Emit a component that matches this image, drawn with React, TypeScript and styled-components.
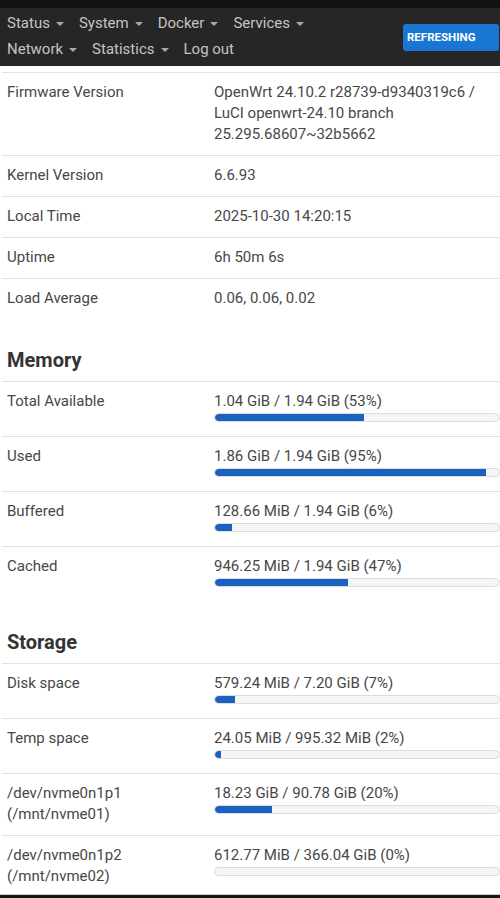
import * as React from 'react'
import styled, { createGlobalStyle } from 'styled-components'

const GlobalStyle = createGlobalStyle`
    html, body {
        margin: 0;
        padding: 0;
        background: #ffffff;
    }
    body {
        font-family: Roboto, "Liberation Sans", sans-serif;
        font-size: 15px;
        color: #404040;
    }
`

const Screen = styled.div`
    width: 500px;
    height: 898px;
    display: flex;
    flex-direction: column;
    overflow: hidden;
`

const Header = styled.header`
    flex: none;
    height: 58px;
    border-top: 8px solid #131313;
    background: #262626;
    display: flex;
    align-items: center;
    padding-right: 1px;
`

const Nav = styled.nav`
    width: 345px;
    display: flex;
    flex-wrap: wrap;
    align-self: flex-start;
    padding-top: 2px;
`

const NavItem = styled.span`
    display: flex;
    align-items: center;
    height: 26px;
    padding: 0 8px 0 7px;
    color: #c4c4c4;
    font-size: 15px;
`

const Caret = styled.span`
    width: 0;
    height: 0;
    margin-left: 6px;
    margin-top: 2px;
    border-left: 4px solid transparent;
    border-right: 4px solid transparent;
    border-top: 4px solid #a8a8a8;
`

const RefreshButton = styled.span`
    margin-left: auto;
    width: 96px;
    height: 27px;
    box-sizing: border-box;
    padding-left: 4px;
    display: flex;
    align-items: center;
    background: #1976d2;
    border-radius: 3px;
    color: #ffffff;
    font-weight: 700;
    font-size: 11.5px;
`

const Content = styled.main`
    flex: 1;
    overflow: hidden;
    padding: 6px 0 0 2px;
`

const Table = styled.div`
    display: flex;
    flex-direction: column;
`

const Row = styled.div`
    display: grid;
    grid-template-columns: 207px 1fr;
    border-top: 1px solid #e2e2e2;
    padding: 9px 0 10px;
    line-height: 21px;
`

const Label = styled.div`
    padding-left: 5px;
    color: #474747;
`

const Value = styled.div`
    padding-left: 5px;
    color: #474747;
`

const SectionTitle = styled.h3`
    margin: 28px 0 8px 5px;
    font-size: 20px;
    line-height: 26px;
    font-weight: 700;
    color: #333333;
`

const Bar = styled.div`
    height: 9px;
    margin: 1px 0 4px;
    box-sizing: border-box;
    border: 1px solid #dcdcdc;
    border-radius: 5px;
    background: #f5f5f5;
    overflow: hidden;
`

const Fill = styled.div`
    height: 100%;
    background: #1a62c0;
    border-radius: 4px 0 0 4px;
`

const BottomBar = styled.div`
    flex: none;
    height: 3px;
    border-top: 1px solid #d0d0d0;
    background: #141414;
`

const system = [
    { label: 'Firmware Version', value: ['OpenWrt 24.10.2 r28739-d9340319c6 /', 'LuCI openwrt-24.10 branch', '25.295.68607~32b5662'] },
    { label: 'Kernel Version', value: ['6.6.93'] },
    { label: 'Local Time', value: ['2025-10-30 14:20:15'] },
    { label: 'Uptime', value: ['6h 50m 6s'] },
    { label: 'Load Average', value: ['0.06, 0.06, 0.02'] },
]

const memory = [
    { label: ['Total Available'], text: '1.04 GiB / 1.94 GiB (53%)', pct: 52.5 },
    { label: ['Used'], text: '1.86 GiB / 1.94 GiB (95%)', pct: 95.5 },
    { label: ['Buffered'], text: '128.66 MiB / 1.94 GiB (6%)', pct: 6 },
    { label: ['Cached'], text: '946.25 MiB / 1.94 GiB (47%)', pct: 47 },
]

const storage = [
    { label: ['Disk space'], text: '579.24 MiB / 7.20 GiB (7%)', pct: 7 },
    { label: ['Temp space'], text: '24.05 MiB / 995.32 MiB (2%)', pct: 2 },
    { label: ['/dev/nvme0n1p1', '(/mnt/nvme01)'], text: '18.23 GiB / 90.78 GiB (20%)', pct: 20 },
    { label: ['/dev/nvme0n1p2', '(/mnt/nvme02)'], text: '612.77 MiB / 366.04 GiB (0%)', pct: 0 },
]

const menus = [
    { name: 'Status', caret: true },
    { name: 'System', caret: true },
    { name: 'Docker', caret: true },
    { name: 'Services', caret: true },
    { name: 'Network', caret: true },
    { name: 'Statistics', caret: true },
    { name: 'Log out', caret: false },
]

type Usage = { label: string[], text: string, pct: number }

const UsageTable = ({ rows }: { rows: Usage[] }) => (
    <Table>
        {rows.map(r => (
            <Row key={r.label[0]}>
                <Label>{r.label.map(l => <div key={l}>{l}</div>)}</Label>
                <Value>
                    <div>{r.text}</div>
                    <Bar>{r.pct > 0 && <Fill style={{ width: `${r.pct}%` }} />}</Bar>
                </Value>
            </Row>
        ))}
    </Table>
)

export default function App() {
    return (
        <Screen>
            <GlobalStyle />
            <Header>
                <Nav>
                    {menus.map(m => (
                        <NavItem key={m.name}>
                            {m.name}
                            {m.caret && <Caret />}
                        </NavItem>
                    ))}
                </Nav>
                <RefreshButton>REFRESHING</RefreshButton>
            </Header>

            <Content>
                <Table>
                    {system.map(r => (
                        <Row key={r.label}>
                            <Label>{r.label}</Label>
                            <Value>{r.value.map(v => <div key={v}>{v}</div>)}</Value>
                        </Row>
                    ))}
                </Table>

                <SectionTitle>Memory</SectionTitle>
                <UsageTable rows={memory} />

                <SectionTitle>Storage</SectionTitle>
                <UsageTable rows={storage} />
            </Content>
            <BottomBar />
        </Screen>
    )
}
